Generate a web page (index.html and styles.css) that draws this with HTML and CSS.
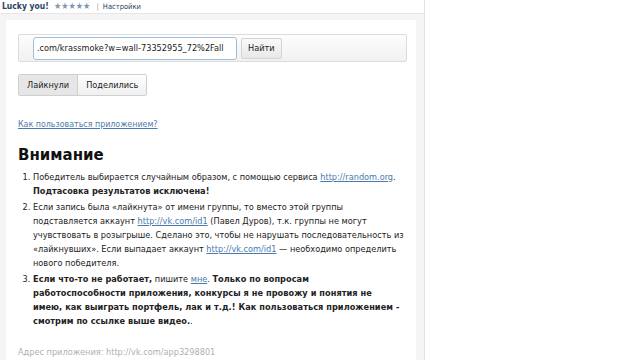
FILE: index.html
```html
<!DOCTYPE html>
<html lang="ru">
<head>
  <meta charset="UTF-8">
  <title>Lucky you!</title>
  <link rel="stylesheet" href="styles.css">
</head>
<body>
  <div class="app">
    <!-- верхняя строка приложения -->
    <div class="topbar">
      <span class="app-name">Lucky you!</span>
      <span class="stars">★★★★★</span>
      <span class="sep">|</span>
      <a class="settings">Настройки</a>
    </div>

    <div class="frame">
      <div class="card">
        <div class="search">
          <input class="search-input" type="text" value=".com/krassmoke?w=wall-73352955_72%2Fall">
          <button class="btn">Найти</button>
        </div>

        <div class="tabs">
          <span class="tab active">Лайкнули</span>
          <span class="tab">Поделились</span>
        </div>

        <a class="help-link">Как пользоваться приложением?</a>

        <h2 class="title">Внимание</h2>
        <ol class="rules">
          <li>Победитель выбирается случайным образом, с помощью сервиса <a>http://random.org</a>.
            <b>Подтасовка результатов исключена!</b></li>
          <li>Если запись была «лайкнута» от имени группы, то вместо этой группы подставляется аккаунт
            <a>http://vk.com/id1</a> (Павел Дуров), т.к. группы не могут учувствовать в розыгрыше. Сделано это, чтобы не нарушать последовательность из «лайкнувших». Если выпадает аккаунт
            <a>http://vk.com/id1</a> — необходимо определить нового победителя.</li>
          <li class="note"><b>Если что-то не работает,</b> пишите <a>мне</a>. <b>Только по вопросам<br>работоспособности приложения, конкурсы я не провожу и понятия не<br>имею, как выиграть портфель, лак и т.д.! Как пользоваться приложением -<br>смотрим по ссылке выше видео.</b>.</li>
        </ol>

        <div class="address">Адрес приложения: http://vk.com/app3298801</div>
      </div>
    </div>
  </div>
</body>
</html>
```

FILE: styles.css
```css
body {
  margin: 0;
  padding: 0;
  background: #fff;
  font-family: "DejaVu Sans Condensed", "DejaVu Sans", sans-serif;
  font-size: 9.1px;
  color: #000;
}

.app {
  width: 424px;
  height: 360px;
  border-right: 1px solid #e2e2e2;
  overflow: hidden;
}

.topbar {
  height: 13px;
  line-height: 12px;
  padding-left: 2px;
  border-bottom: 1px solid #e6e6e6;
  font-size: 7.5px;
  white-space: nowrap;
}

.app-name {
  font-weight: bold;
  font-size: 8.5px;
  color: #2b4560;
}

.stars {
  color: #7f96ad;
  font-size: 9px;
  margin-left: 3px;
}

.sep {
  color: #a0a0a0;
  margin: 0 2px 0 4px;
}

.settings {
  color: #2b4560;
}

.frame {
  background: #f5f5f5;
  padding: 6px 8px 0 6px;
}

.card {
  background: #fff;
  padding: 14px 8px 20px 12px;
  height: 340px;
}

/* строка поиска */
.search {
  display: flex;
  align-items: center;
  gap: 4px;
  height: 26px;
  margin-right: 1px;
  padding: 0 0 0 14px;
  border: 1px solid #dcdcdc;
  border-radius: 2px;
  background: linear-gradient(to bottom, #fdfdfd, #f1f1f1);
}

.search-input {
  width: 196px;
  height: 17px;
  padding: 2px 3px;
  border: 1px solid #9fbedd;
  border-radius: 3px;
  font-family: "DejaVu Sans Condensed", "DejaVu Sans", sans-serif;
  font-size: 9.1px;
  color: #222;
  background: #fff;
  outline: none;
}

.btn {
  height: 21px;
  padding: 0 6px;
  border: 1px solid #d4d4d4;
  border-radius: 2px;
  background: linear-gradient(to bottom, #fafafa, #e8e8e8);
  font-family: "DejaVu Sans Condensed", "DejaVu Sans", sans-serif;
  font-size: 9.1px;
  color: #222;
}

/* вкладки */
.tabs {
  display: inline-flex;
  margin-top: 12px;
  border: 1px solid #cfcfcf;
  border-radius: 2px;
}

.tab {
  padding: 0 8px;
  line-height: 20px;
  color: #222;
  background: linear-gradient(to bottom, #fdfdfd, #f0f0f0);
}

.tab.active {
  background: #e6e6e6;
  border-right: 1px solid #cfcfcf;
}

.help-link {
  display: block;
  margin-top: 23px;
  font-size: 8.8px;
  color: #4a7bae;
  text-decoration: underline;
}

.title {
  margin: 17px 0 6px;
  font-family: "DejaVu Sans", sans-serif;
  font-size: 15px;
  font-weight: bold;
  color: #111;
}

.rules {
  margin: 0;
  padding-left: 15px;
  line-height: 14px;
  color: #222;
}

.rules li {
  margin-bottom: 2px;
}

.rules .note {
  white-space: nowrap;
}

.rules .note b {
  letter-spacing: 0.05px;
}

.rules a {
  color: #4a7bae;
  text-decoration: underline;
}

.address {
  margin-top: 19px;
  color: #b0b0b0;
}
```
